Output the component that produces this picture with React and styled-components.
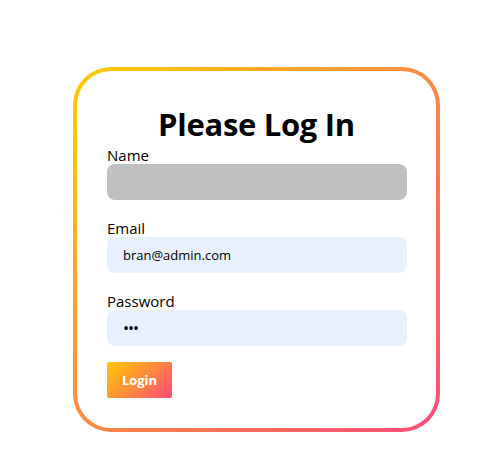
import React from 'react';
import styled, { createGlobalStyle } from 'styled-components';

const GlobalStyle = createGlobalStyle`
  html, body {
    margin: 0;
    padding: 0;
    background: #fff;
  }
  body {
    font-family: "Open Sans", "Noto Sans", sans-serif;
    color: #000;
  }
`;

const Page = styled.main`
  padding: 67px 0 0 73px;
`;

const Card = styled.form`
  box-sizing: border-box;
  width: 367px;
  height: 365px;
  border: 4px solid transparent;
  border-radius: 38px;
  background:
    linear-gradient(#fff, #fff) padding-box,
    linear-gradient(135deg, #ffcc00 0%, #ff8a45 50%, #ff4a7c 100%) border-box;
  padding: 33px 30px 0 30px;
  display: flex;
  flex-direction: column;
`;

const Title = styled.h1`
  margin: 0 0 2px;
  text-align: center;
  font-size: 31px;
  line-height: 40px;
  font-weight: 700;
  letter-spacing: -0.3px;
`;

const Field = styled.div`
  display: flex;
  flex-direction: column;
  margin-bottom: ${(p) => (p.$last ? '16px' : '19px')};
`;

const Label = styled.label`
  font-size: 15px;
  line-height: 18px;
`;

const Input = styled.input`
  box-sizing: border-box;
  width: 300px;
  height: 36px;
  border: none;
  outline: none;
  border-radius: 8px;
  padding: 0 16px;
  font-family: "Open Sans", "Noto Sans", sans-serif;
  font-size: ${(p) => (p.type === 'password' ? '16px' : '13px')};
  color: #000;
  background: ${(p) => (p.$muted ? '#c0c0c0' : '#e8f0fe')};
  letter-spacing: ${(p) => (p.type === 'password' ? '-1px' : '0')};
`;

const Button = styled.button`
  align-self: flex-start;
  width: 65px;
  height: 36px;
  border: none;
  border-radius: 2px;
  background: linear-gradient(135deg, #ffc800 0%, #ff8c3c 50%, #ff4a7a 100%);
  color: #fff;
  font-family: "Open Sans", "Noto Sans", sans-serif;
  font-weight: 700;
  font-size: 13px;
  padding: 0;
  cursor: pointer;
`;

export default function App() {
  return (
    <>
      <GlobalStyle />
      <Page>
        <Card onSubmit={(e) => e.preventDefault()}>
          <Title>Please Log In</Title>
          <Field>
            <Label>Name</Label>
            <Input $muted type="text" readOnly />
          </Field>
          <Field>
            <Label>Email</Label>
            <Input type="email" defaultValue="bran@admin.com" />
          </Field>
          <Field $last>
            <Label>Password</Label>
            <Input type="password" defaultValue="abc" />
          </Field>
          <Button type="submit">Login</Button>
        </Card>
      </Page>
    </>
  );
}
